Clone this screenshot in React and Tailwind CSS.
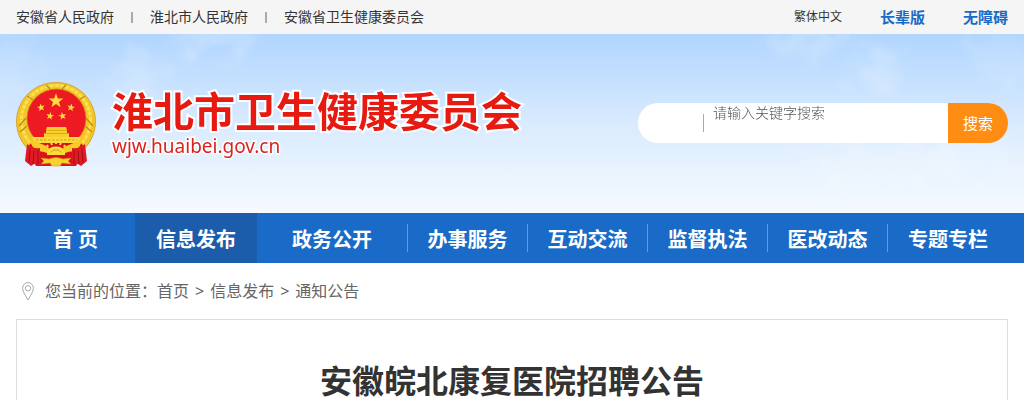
const topLinks = ['安徽省人民政府', '淮北市人民政府', '安徽省卫生健康委员会']

const navItems = [
  { label: '首 页' },
  { label: '信息发布', active: true },
  { label: '政务公开', divider: true },
  { label: '办事服务', divider: true },
  { label: '互动交流', divider: true },
  { label: '监督执法', divider: true },
  { label: '医改动态', divider: true },
  { label: '专题专栏' }
]

const crumbs = ['首页', '信息发布', '通知公告']

const star = 'M0 -10 L2.4 -3.2 L9.5 -3.1 L3.8 1.2 L5.9 8.1 L0 4 L-5.9 8.1 L-3.8 1.2 L-9.5 -3.1 L-2.4 -3.2 Z'

function Emblem() {
  return (
    <svg viewBox="0 0 80 86" className="h-[86px] w-20 shrink-0" aria-hidden="true">
      <path d="M40 0.5 A39 39 0 0 1 66 69 L14 69 A39 39 0 0 1 40 0.5 Z" fill="#f2c62a" stroke="#cf9a1c" strokeWidth="0.8" />
      <circle cx="40" cy="38" r="34.5" fill="none" stroke="#fbe14e" strokeWidth="3" strokeDasharray="4 1.2" />
      <path d="M4 50 L11 44 M3 44 L10 36 M76 50 L69 44 M77 44 L70 36 M11 14 L17 18 M69 14 L63 18 M30 3 L34 7 M50 3 L46 7" stroke="#c18a16" strokeWidth="1.2" />
      <circle cx="40.5" cy="36.5" r="29.5" fill="#ed1a23" stroke="#c58a16" strokeWidth="0.8" />

      <g fill="#fbdc3a">
        <path d={star} transform="translate(40 19) scale(0.78)" />
        <path d={star} transform="translate(25 25.5) rotate(-12) scale(0.42)" />
        <path d={star} transform="translate(55 25.5) rotate(12) scale(0.42)" />
        <path d={star} transform="translate(34 34) rotate(12) scale(0.42)" />
        <path d={star} transform="translate(46.5 34) rotate(-12) scale(0.42)" />
      </g>

      <path d="M31 45 H50 L51 48 H30 Z M30 48 H51 V51 H30 Z M28 51 H53 V56 H28 Z" fill="#f9cf2c" />
      <path d="M30 48.3 H51 M28 51.5 H53" stroke="#d59a1b" strokeWidth="0.8" />
      <path d="M16 55 H65 L62 61 H19 Z" fill="#fbd93a" />
      <path d="M20 58 H61" stroke="#e8b128" strokeWidth="1.4" strokeDasharray="2.5 1.5" />

      <path d="M15 61 H65 L69 66 L60 84 H20 L11 66 Z" fill="#d8131d" />
      <path d="M13 58 Q25 61 32 65 L34 68 Q39 72 46 68 L48 65 Q56 61 67 58 L61 69 Q52 69 47 72 H33 Q28 69 19 69 Z" fill="#f7cb2a" />
      <path d="M31 70 A9.5 8 0 0 1 49 70 L49 73 H31 Z" fill="#fbdc3a" />
      <path d="M34.5 70.5 A6 4.5 0 0 1 45.5 70.5" fill="none" stroke="#cf9a1c" strokeWidth="1" />
      <path d="M32 65 L31 63 M36 63 L35 60.5 M40 62 V59.5 M44 63 L45 60.5 M48 65 L49 63" stroke="#fbd936" strokeWidth="2" />

      <path d="M11 62 Q17 67 24 66 L24 83 L18 82 L15 84 L9 79 Z" fill="#e01a24" />
      <path d="M69 62 Q63 67 56 66 L56 83 L62 82 L65 84 L71 79 Z" fill="#e01a24" />
      <path d="M14 67 L13 81 M18 69 L17 82 M22 68 L22 82 M66 67 L67 81 M62 69 L63 82 M58 68 L58 82" stroke="#9d0c14" strokeWidth="0.9" />
      <path d="M25 76 L33 77 Q40 74 47 77 L55 76 L52 79 L55 82 L46 81 L44 84 H36 L34 81 L25 82 L28 79 Z" fill="#f9cf2c" stroke="#cf9a1c" strokeWidth="0.5" />
    </svg>
  )
}

function Clouds() {
  return (
    <svg
      viewBox="0 0 1024 179"
      preserveAspectRatio="none"
      className="absolute inset-0 h-full w-full"
      aria-hidden="true"
    >
      <defs>
        <filter id="cloud" x="-60%" y="-60%" width="220%" height="220%">
          <feGaussianBlur in="SourceGraphic" stdDeviation="9" result="soft" />
          <feTurbulence type="fractalNoise" baseFrequency="0.04" numOctaves="5" seed="7" result="noise" />
          <feDisplacementMap in="soft" in2="noise" scale="50" xChannelSelector="R" yChannelSelector="G" result="shape" />
          <feGaussianBlur in="shape" stdDeviation="1" />
        </filter>
      </defs>
      <g fill="#ffffff" filter="url(#cloud)">
        <ellipse cx="215" cy="4" rx="44" ry="12" opacity="0.25" />
        <ellipse cx="138" cy="40" rx="26" ry="18" opacity="0.18" />
        <ellipse cx="10" cy="30" rx="26" ry="34" opacity="0.12" />
        <ellipse cx="812" cy="4" rx="44" ry="12" opacity="0.25" />
        <ellipse cx="875" cy="38" rx="24" ry="20" opacity="0.22" />
        <ellipse cx="1000" cy="24" rx="30" ry="24" opacity="0.12" />
        <ellipse cx="880" cy="130" rx="80" ry="20" opacity="0.2" />
        <ellipse cx="980" cy="124" rx="50" ry="22" opacity="0.15" />
      </g>
    </svg>
  )
}

function App() {
  return (
    <div className="bg-white font-['Noto_Sans','Noto_Sans_CJK_SC',sans-serif] text-[#333333]">

      <div className="flex h-[34px] items-center justify-between bg-[#f5f5f5] px-4">

        <div className="flex items-center gap-[17px] text-sm">
          {topLinks.map((link, i) => (
            <div key={link} className="flex items-center gap-[17px]">
              {i > 0 && <span className="h-[11px] w-0.5 bg-[#aaaaaa]" />}
              <a href="#">{link}</a>
            </div>
          ))}
        </div>

        <div className="flex items-center gap-[38px] text-[15px] font-bold text-[#1a6bc7]">
          <a href="#" className="text-xs font-normal text-[#333333]">繁体中文</a>
          <a href="#">长辈版</a>
          <a href="#">无障碍</a>
        </div>

      </div>

      <header className="relative bg-linear-to-b from-[#b0d5fe] via-[#d9ebfe] to-[#f5fafe]">

        <Clouds />

        <div className="relative flex items-start justify-between px-4 pt-12 pb-[45px]">

          <a href="#" className="flex items-start gap-4">
            <Emblem />
            <div className="pt-1">
              <h1 className="text-[41px] leading-[50px] font-bold text-[#e71a12] [paint-order:stroke_fill] [-webkit-text-stroke:4px_#ffffff]">
                淮北市卫生健康委员会
              </h1>
              <p className="text-[19px] leading-5 text-[#d8241c] [paint-order:stroke_fill] [-webkit-text-stroke:3px_#ffffff]">
                wjw.huaibei.gov.cn
              </p>
            </div>
          </a>

          <form className="mt-[21px] flex h-10 w-[370px] overflow-hidden rounded-full bg-white">
            <div className="flex w-[66px] items-center">
              <select aria-label="搜索范围" className="h-10 w-full appearance-none bg-transparent" />
              <span className="h-[18px] w-px bg-[#aaaaaa]" />
            </div>
            <input
              type="text"
              aria-label="关键字"
              placeholder="请输入关键字搜索"
              className="h-5 min-w-0 flex-1 px-[9px] text-sm font-light outline-none placeholder:text-[#555555]"
            />
            <button type="button" className="w-[60px] bg-[#ff8c13] text-[15px] text-white">
              搜索
            </button>
          </form>

        </div>

      </header>

      <nav className="bg-[#1a6bc7] px-4">
        <ul className="grid grid-cols-[119fr_122fr_151fr_repeat(5,120fr)]">
          {navItems.map((item) => (
            <li
              key={item.label}
              className={item.active ? 'flex h-[50px] items-center bg-[#1b5dab]' : 'flex h-[50px] items-center'}
            >
              <a href="#" className="flex-1 pt-1 text-center text-xl leading-[46px] font-bold text-white">
                {item.label}
              </a>
              {item.divider && <span className="h-7 w-px bg-[#5f9ae0]" />}
            </li>
          ))}
        </ul>
      </nav>

      <main className="px-4">

        <div className="flex h-14 items-center pl-[6px] text-base text-[#666666]">
          <svg viewBox="0 0 12 19" className="mr-[11px] h-[19px] w-3" fill="none" stroke="#aaaaaa" aria-hidden="true">
            <path d="M6 18 C4 14 0.6 10 0.6 6.2 A5.4 5.6 0 0 1 11.4 6.2 C11.4 10 8 14 6 18 Z" />
            <circle cx="6" cy="6.3" r="2.7" />
          </svg>
          <span>您当前的位置：</span>
          {crumbs.map((crumb, i) => (
            <span key={crumb} className="flex">
              {i > 0 && <span className="px-[6px]">&gt;</span>}
              <a href="#">{crumb}</a>
            </span>
          ))}
        </div>

        <article className="border border-[#dddddd] px-4 pt-10 pb-10">
          <h2 className="text-center text-[32px] leading-[42px] font-bold">
            安徽皖北康复医院招聘公告
          </h2>
        </article>

      </main>

    </div>
  )
}

export default App
